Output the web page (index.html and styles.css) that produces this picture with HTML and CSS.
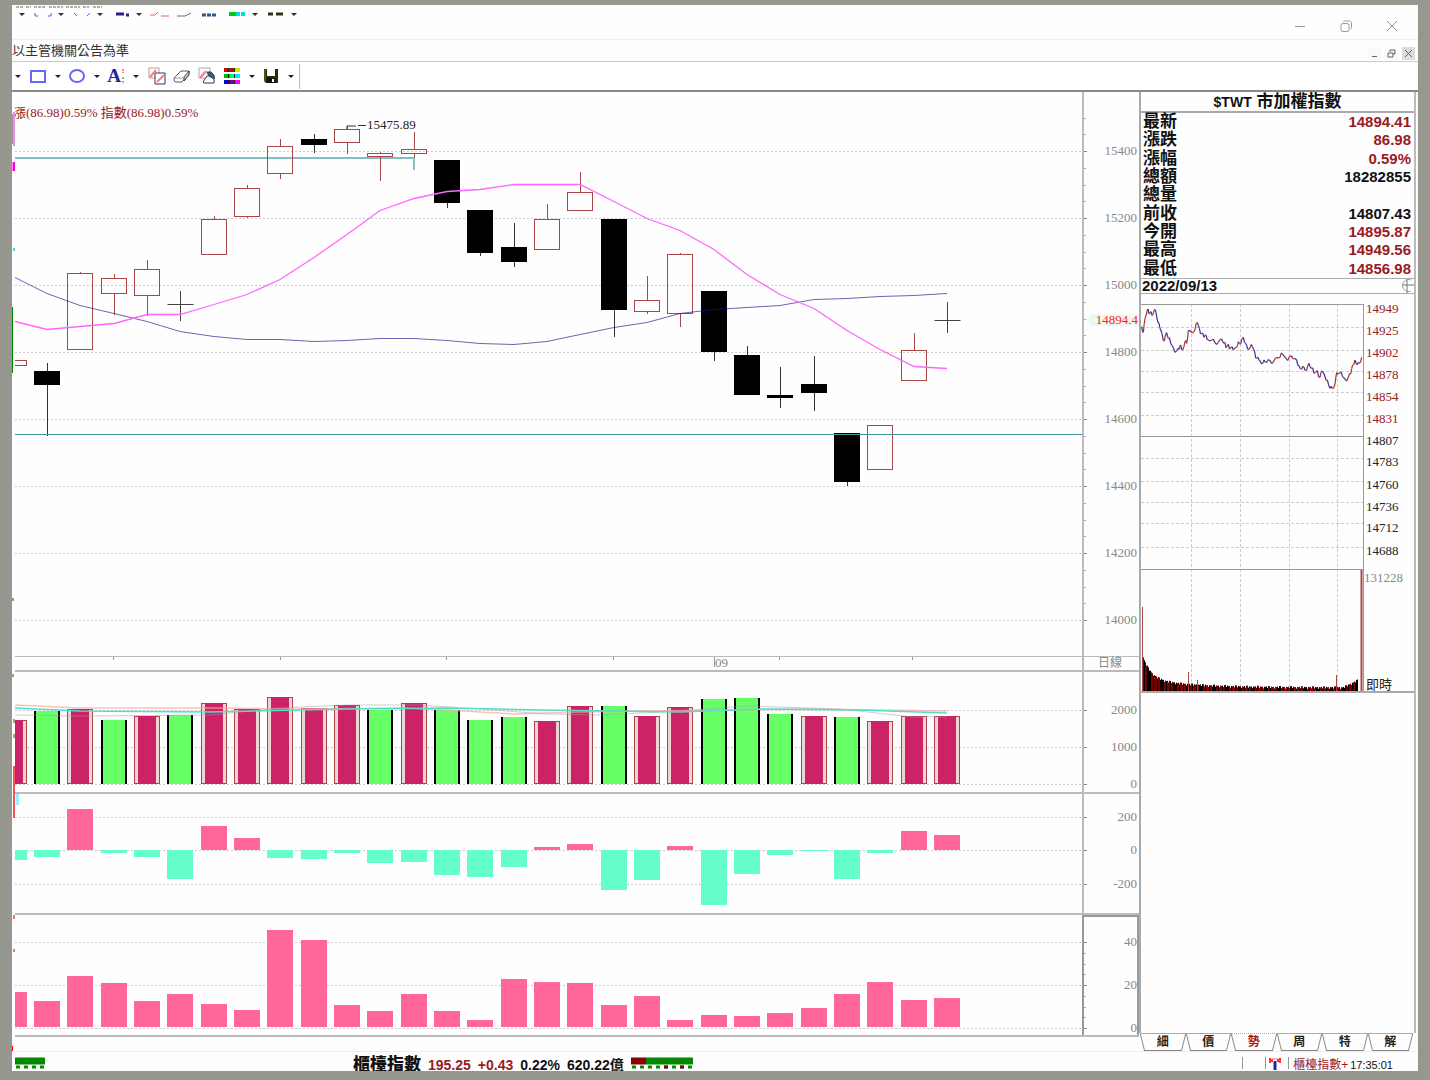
FILE: index.html
```html
<!DOCTYPE html>
<html lang="zh-Hant">
<head>
<meta charset="utf-8">
<title>$TWT 市加權指數</title>
<link rel="stylesheet" href="styles.css">
</head>
<body>
<div class="window">
  <header class="titlebar">
    <svg class="ghost" width="300" height="12" aria-hidden="true">
      <path d="M1 2h8m2 0h5m3 0h12m3 0h14m3 0h14m3 0h6m4 0h9" stroke="#666" stroke-dasharray="3 1"/>
      <path d="M4 8h6l-3 3zM43 8h6l-3 3zM82 8h6l-3 3zM121 8h6l-3 3zM237 8h6l-3 3zM276 8h6l-3 3z" fill="#333"/>
      <path d="M20 8v3h3m10 0h3v-3M59 8l3 3m10 0l3-3" stroke="#55f" fill="none"/>
      <path d="M101 9h8m2 1h3" stroke="#228" stroke-width="3"/>
      <path d="M135 10h5l3-3m3 4h8" stroke="#d66" fill="none"/>
      <path d="M162 11h8l6-3" stroke="#668" fill="none"/>
      <path d="M187 10h14" stroke="#358" stroke-width="3" stroke-dasharray="4 1"/>
      <path d="M214 9h7" stroke="#0c0" stroke-width="4"/><path d="M221 9h9" stroke="#0dd" stroke-width="4" stroke-dasharray="4 1"/>
      <path d="M253 9h15" stroke="#331" stroke-width="3" stroke-dasharray="5 3 7"/>
    </svg>
    <div class="window-buttons">
      <button aria-label="最小化"><svg width="12" height="12"><path d="M1 6.500h10"/></svg></button>
      <button aria-label="還原"><svg width="12" height="12"><rect x="1" y="3.500" width="8" height="8" rx="2"/><path d="M3.500 2c0-1 1-1 2-1h4c1 0 2 1 2 2v4c0 1 0 2-1 2"/></svg></button>
      <button aria-label="關閉"><svg width="12" height="12"><path d="M1 1l10 10M11 1L1 11"/></svg></button>
    </div>
  </header>

  <div class="menubar">
    <span class="notice">以主管機關公告為準</span>
    <div class="child-buttons">
      <button aria-label="最小化子視窗"><svg width="9" height="9"><path d="M2 7.500h5"/></svg></button>
      <button aria-label="還原子視窗"><svg width="9" height="9"><path d="M3 3V1h5v4H6M1 4h5v4H1z"/></svg></button>
      <button class="shaded" aria-label="關閉子視窗"><svg width="9" height="9"><path d="M1 1l7 7M8 1L1 8"/></svg></button>
    </div>
  </div>

  <nav class="toolbar" aria-label="繪圖工具">
    <button class="drop first" aria-label="線段選單"></button>
    <button class="tool" aria-label="矩形"><svg width="18" height="18"><rect x="2" y="4" width="14" height="11" fill="#fff" stroke="#66f" stroke-width="2"/></svg></button>
    <button class="drop" aria-label="矩形選單"></button>
    <button class="tool" aria-label="橢圓"><svg width="18" height="18"><ellipse cx="9" cy="9" rx="7" ry="6" fill="#fff" stroke="#66f" stroke-width="2"/></svg></button>
    <button class="drop" aria-label="橢圓選單"></button>
    <button class="tool letter" aria-label="文字">A<svg width="4" height="16"><path d="M2 1v4" stroke="#e88" stroke-width="2" stroke-dasharray="2 1"/><path d="M2 9v6" stroke="#8b8" stroke-width="2" stroke-dasharray="2 2"/></svg></button>
    <button class="drop" aria-label="文字選單"></button>
    <button class="tool wide" aria-label="複製線段"><svg width="18" height="18"><path d="M1 1h10v10H1z" fill="#fff" stroke="#b99"/><path d="M7 6h10v11H7z" fill="#fff" stroke="#336"/><path d="M2 10l6-7M9 15l7-7" stroke="#f77" stroke-width="2"/></svg></button>
    <button class="tool wide" aria-label="橡皮擦"><svg width="18" height="18"><path d="M1 12q0-1 1-2l6-6h7q2 0 1 2l-6 8q-1 1-2 1H3q-2 0-2-3z" fill="#fff" stroke="#557"/><path d="M11 10l5-6v4l-5 6z" fill="#cc7" stroke="#335"/><path d="M2 11h8l5-6" fill="none" stroke="#99a"/></svg></button>
    <button class="tool wide" aria-label="全部清除"><svg width="18" height="18"><path d="M1 1h11v10H1z" fill="#fff" stroke="#aab"/><path d="M2 11l6-7" stroke="#f77" stroke-width="2"/><path d="M5 15l4-6h7v7H6z" fill="#fff" stroke="#336"/><path d="M9 5h4l3 3v4l-5-3z" fill="#276" stroke="#336"/></svg></button>
    <button class="tool palette" aria-label="色彩"><svg width="18" height="18"><g stroke-width="4"><path d="M1 3h6" stroke="#d00"/><path d="M7 3h5" stroke="#820"/><path d="M12 3h5" stroke="#dd0"/><path d="M1 9h6" stroke="#0b0"/><path d="M7 9h5" stroke="#0f6"/><path d="M12 9h5" stroke="#0ee"/><path d="M1 15h6" stroke="#00e"/><path d="M7 15h5" stroke="#70a"/><path d="M12 15h5" stroke="#f0f"/></g><path d="M5.500 1v16M11.500 1v16" stroke="#222" stroke-dasharray="4 2"/></svg></button>
    <button class="drop" aria-label="色彩選單"></button>
    <button class="tool" aria-label="儲存"><svg width="18" height="18"><path d="M2 2h14v14H4l-2-2z" fill="#2d2a05"/><path d="M5 2h8v7H5z" fill="#fff"/><path d="M5 11h8v5H5z" fill="#111"/><path d="M10 12h2v3h-2z" fill="#fff"/><path d="M3 2v12" stroke="#772"/></svg></button>
    <button class="drop" aria-label="儲存選單"></button>
    <span class="divider"></span>
  </nav>

  <main class="workspace">
    <svg class="edge" aria-hidden="true">
      <path d="M1 22v30" stroke="#433" /><path d="M2 20v34" stroke="#e8e" stroke-width="2"/>
      <path d="M2 70v9" stroke="#f0d" stroke-width="3"/><path d="M2 156v3" stroke="#4dd" stroke-width="2"/>
      <path d="M0 215v66" stroke="#080" stroke-width="2"/><path d="M1 506v3M1 582v3" stroke="#998" stroke-width="2"/>
      <path d="M2 627v4M2 642v4" stroke="#b96" stroke-width="2"/><path d="M2 674v52" stroke="#e55" stroke-width="2"/>
      <path d="M2 823v4M2 857v3" stroke="#e77" stroke-width="2"/><path d="M0 954v14" stroke="#f00" stroke-width="2"/>
    </svg>

    <section class="charts" aria-label="日線圖">
      <div class="pane price">
        <p class="legend">漲(86.98)0.59% 指數(86.98)0.59%</p>
        <svg class="plot" id="price"></svg>
        <svg class="axis" id="price-axis"></svg>
      </div>
      <div class="pane timeline">
        <svg class="plot" id="timeline"></svg>
        <span class="period">日線</span>
      </div>
      <div class="pane volume">
        <svg class="plot" id="volume"></svg>
        <svg class="axis" id="volume-axis"></svg>
      </div>
      <div class="pane flow">
        <svg class="plot" id="flow"></svg>
        <svg class="axis" id="flow-axis"></svg>
      </div>
      <div class="pane strength">
        <svg class="plot" id="strength"></svg>
        <svg class="axis selected" id="strength-axis"></svg>
      </div>
    </section>

    <aside class="quote">
      <div class="quote-body">
        <h1><span>$TWT</span> 市加權指數</h1>
        <table>
          <tr><th>最新</th><td class="up">14894.41</td></tr>
          <tr><th>漲跌</th><td class="up">86.98</td></tr>
          <tr><th>漲幅</th><td class="up">0.59%</td></tr>
          <tr><th>總額</th><td>18282855</td></tr>
          <tr><th>總量</th><td></td></tr>
          <tr><th>前收</th><td>14807.43</td></tr>
          <tr><th>今開</th><td class="up">14895.87</td></tr>
          <tr><th>最高</th><td class="up">14949.56</td></tr>
          <tr><th>最低</th><td class="up">14856.98</td></tr>
        </table>
        <div class="date-row">
          <time datetime="2022-09-13">2022/09/13</time>
          <svg width="14" height="14"><path d="M7 0v14M2 6h12" stroke="#777"/><path d="M11 1a6 6 0 1 0 0 11" fill="none" stroke="#999"/></svg>
        </div>
        <svg class="intraday" id="intraday"></svg>
      </div>
      <div class="tabs" role="tablist">
        <button role="tab">細</button>
        <button role="tab">價</button>
        <button role="tab" class="active" aria-selected="true">勢</button>
        <button role="tab">周</button>
        <button role="tab">特</button>
        <button role="tab">解</button>
      </div>
    </aside>
  </main>

  <footer class="statusbar">
    <svg class="meter-left" width="31" height="14"><path d="M0 4h30" stroke="#080" stroke-width="7"/><path d="M1 10h29" stroke="#080" stroke-width="3" stroke-dasharray="4 4"/></svg>
    <div class="ticker">
      <b>櫃檯指數</b><span class="up">195.25</span><span class="up">+0.43</span><span>0.22%</span><span>620.22億</span>
      <svg width="63" height="14"><path d="M0 4h15" stroke="#800" stroke-width="7"/><path d="M15 4h47" stroke="#080" stroke-width="7"/><path d="M1 10h61" stroke="#080" stroke-width="3" stroke-dasharray="4 4"/><path d="M33 10h30" stroke="#800" stroke-width="3" stroke-dasharray="4 12"/></svg>
    </div>
    <div class="session">
      <i></i><i></i>
      <svg width="14" height="14"><path d="M2 1v5M4 2v3M12 1v5M10 2v3" stroke="#f33" stroke-width="2"/><path d="M4 2h6" stroke="#f66"/><path d="M7 4v9" stroke="#22a" stroke-width="3"/></svg>
      <i></i>
      <span class="up">櫃檯指數+</span><time>17:35:01</time>
    </div>
  </footer>
</div>
<script src="chart.js"></script>
</body>
</html>
```
FILE: styles.css
```css
* { box-sizing: border-box; }

body {
  margin: 0;
  min-height: 100vh;
  padding: 5px 12px 9px;
  background: #96978f;
  color: #111;
  font: 14px/18px "Liberation Sans", "Noto Sans CJK TC", sans-serif;
}

button { padding: 0; border: 0; background: none; color: inherit; font: inherit; }
svg { display: block; overflow: hidden; }
.up { color: #981b1e; }

.window { display: flex; flex-direction: column; background: #fefefe; overflow: hidden; }

.titlebar { display: flex; justify-content: space-between; height: 35px; padding-left: 3px; border-bottom: 1px solid #eff0f4; }
.window-buttons { display: flex; align-items: center; padding: 8px 3px 0 0; }
.window-buttons button { display: grid; place-items: center; width: 46px; height: 26px; }
.window-buttons svg { fill: none; stroke: #999; }

.menubar { display: flex; justify-content: space-between; align-items: center; height: 22px; border-bottom: 1px solid #ccc; }
.notice { font-size: 13px; color: #333; }
.child-buttons { display: flex; gap: 4px; padding: 6px 3px 0 0; }
.child-buttons button { display: grid; place-items: center; width: 13px; height: 13px; background: #fafafa; }
.child-buttons .shaded { background: #ddd; }
.child-buttons svg { fill: none; stroke: #567; }

.toolbar { display: flex; align-items: center; height: 30px; padding-left: 3px; border-bottom: 2px solid #888; background: #fff; }
.tool { display: grid; place-items: center; width: 22px; height: 26px; }
.tool.wide { width: 25px; }
.tool.palette { margin-left: 2px; }
.tool.letter { display: flex; align-items: center; justify-content: center; color: #229; font: bold 19px/26px "Liberation Serif", serif; }
.drop { display: grid; place-items: center; width: 17px; height: 26px; }
.drop.first { width: 12px; justify-items: start; }
.drop::before { content: ""; border: 3px solid transparent; border-top-color: #222; border-bottom: 0; }
.divider { width: 1px; height: 25px; background: #bbb; }

.workspace { display: grid; grid-template-columns: 3px 1fr 279px; border-bottom: 1px solid #eee; }
.edge { width: 3px; height: 100%; }

.charts { min-width: 0; padding-bottom: 14px; overflow: hidden; }
.pane { position: relative; display: grid; grid-template-columns: 1fr 57px; border-bottom: 2px solid #bbb; }
.pane > svg { width: 100%; height: 100%; }
.price { height: 565px; border-bottom-width: 1px; }
.timeline { height: 15px; }
.timeline > svg { overflow: visible; }
.volume { height: 122px; }
.flow { height: 121px; }
.strength { height: 122px; }
.axis, .period { border-left: 2px solid #bbb; }
.axis.selected { border: 2px solid #999; border-bottom: 0; }
.period { color: #888; font: 12px/13px "Liberation Sans", "Noto Sans CJK TC", sans-serif; padding-left: 14px; }
.legend { position: absolute; top: 13px; left: -2px; margin: 0; color: #981b1e; font: 13px/16px "Liberation Serif", "Noto Sans CJK TC", serif; }

text { font: 13px "Liberation Serif", "Noto Sans CJK TC", serif; }

.quote { display: flex; flex-direction: column; padding-right: 2px; }
.quote-body { flex: 1; border-left: 2px solid #aaa; border-right: 2px solid #bbb; }
.quote h1 { height: 21px; margin: 0; border-bottom: 2px solid #aaa; text-align: center; font: bold 17px/20px "Liberation Sans", "Noto Sans CJK TC", sans-serif; }
.quote h1 span { font-size: 14px; }
.quote table { width: 100%; height: 165px; border-collapse: collapse; }
.quote th, .quote td { padding: 0 3px; line-height: 18px; }
.quote th { padding-left: 2px; text-align: left; font: bold 17px/18px "Liberation Sans", "Noto Sans CJK TC", sans-serif; }
.quote td { text-align: right; font-size: 15px; font-weight: bold; }
.date-row { display: flex; justify-content: space-between; align-items: center; height: 16px; padding-left: 1px; border: solid #aaa; border-width: 1px 0; font-size: 15px; line-height: 14px; font-weight: bold; }
.intraday { width: 100%; height: 400px; }

.tabs { display: flex; height: 18px; margin: 0 3px 0 1px; }
.tabs button { position: relative; flex: 1; height: 18px; color: #222; font: bold 12px/17px "Liberation Sans", "Noto Sans CJK TC", sans-serif; border-top: 1px solid #aaa; }
.tabs button::before, .tabs button::after { content: ""; position: absolute; top: 0; bottom: 0; width: 50%; border-bottom: 1px solid #888; }
.tabs button::before { left: 2px; border-left: 1px solid #888; transform: skewX(14deg); }
.tabs button::after { right: 2px; border-right: 1px solid #888; transform: skewX(-14deg); }
.tabs .active { color: #a11; border-top: 1px dotted #aaa; }

.statusbar { display: grid; grid-template-columns: 338px 1fr auto; height: 19px; padding: 5px 25px 0 3px; overflow: hidden; line-height: 16px; }
.ticker { display: flex; gap: 7px; font-weight: bold; }
.ticker b { font-size: 17px; }
.session { display: flex; gap: 2px; font-size: 11px; }
.session span { font-size: 12px; }
.session i { width: 1px; height: 12px; margin-right: 20px; background: #999; }
.session i + svg { margin: 0 2px 0 -20px; }
.session svg + i { margin: 0 2px; }
```
FILE: chart.js
```js
const NS = "http://www.w3.org/2000/svg";
const RED = "#a94646";
const GRID = "#ccc";
const barX = i => Math.round(13.5 + 33.34 * i);

// Opens a drawing group whose origin is the top-left corner of the window area.
function layer(id, left, top) {
  const g = document.createElementNS(NS, "g");
  g.setAttribute("transform", `translate(${-left},${-top})`);
  document.getElementById(id).append(g);
  return (tag, attrs, text) => {
    const el = document.createElementNS(NS, tag);
    for (const k in attrs) el.setAttribute(k, attrs[k]);
    if (text) el.textContent = text;
    g.append(el);
  };
}
const rect = (d, x, y, width, height, fill, stroke = "none") => d("rect", { x, y, width, height, fill, stroke });
const line = (d, x1, y1, x2, y2, stroke, extra = {}) => d("path", { d: `M${x1} ${y1}L${x2} ${y2}`, stroke, fill: "none", ...extra });
const curve = (d, pts, stroke, extra = {}) => d("polyline", { points: pts.join(" "), stroke, fill: "none", ...extra });
const grid = (d, ys) => ys.forEach(y => line(d, 15, y, 4000, y, GRID, { "stroke-dasharray": "2 2" }));

function axis(id, top, ys, labels, minor) {
  const d = layer(id, 1084, top);
  ys.forEach((y, i) => {
    line(d, 1084, y, 1087, y, "#888");
    d("text", { x: 1137, y: y + 3, fill: "#888", "text-anchor": "end" }, labels[i]);
  });
  minor.forEach(y => line(d, 1084, y, 1086, y, "#aaa"));
  return d;
}

// Daily candles: kind, high, body top, body bottom, low
const candles = [
  ["r",360,360,366,366],["k",363,371,385,436],["r",272,273,350,350],["r",274,278,294,315],["r",260,269,296,316],
  ["d",291,305,305,321],["r",216,219,255,255],["r",185,188,217,218],["r",139,146,174,179],["k",134,139,145,153],
  ["r",126,129,143,154],["r",152,153,157,181],["r",132,149,154,158],["k",160,160,203,208],["k",210,210,253,256],
  ["k",223,247,262,267],["r",204,219,250,250],["r",172,192,211,211],["k",219,219,310,337],["r",276,300,312,314],
  ["r",253,254,314,327],["k",291,291,352,361],["k",346,355,395,395],["k",367,395,398,408],["k",356,384,393,411],
  ["k",433,433,482,486],["r",425,425,470,470],["r",333,350,381,381],["d",302,321,321,333]
];
const priceGrid = [151.5,218.5,285.5,352.5,419.5,486.5,553.5,620.5];
{
  const d = layer("price", 15, 92);
  grid(d, priceGrid);
  line(d, 15, 158, 414, 158, "#84bec5", { "stroke-width": 2 });
  line(d, 414, 158, 414, 170, "#84bec5", { "stroke-width": 2 });
  candles.forEach(([kind, high, top, low, bottom], i) => {
    const x = barX(i) + .5;
    if (kind === "d") {
      line(d, x, high, x, bottom, "#444");
      line(d, x - 13, top - .5, x + 13, top - .5, "#444");
    } else if (kind === "k") {
      line(d, x, high, x, bottom, "#333");
      rect(d, x - 13.5, top, 26, low - top, "#000");
    } else {
      line(d, x, high, x, top, RED);
      line(d, x, low, x, bottom, RED);
      rect(d, x - 13, top + .5, 25, low - top - 1, "none", RED);
    }
  });
  line(d, 15, 434.5, 4000, 434.5, "#4599a3");
  curve(d, [277,293,305,313,321,331,336,339,339,341,340,338,338,340,343,344,341,334,327,322,313,309,307,305,299,298,296,295,293]
    .map((y, i) => [Math.max(15, barX(i)), y + .5]), "rgba(20,20,140,.65)");
  curve(d, [321,329,326,323,314,314,304,294,279,257,234,210,198,191,189,184,184,184,201,218,230,249,274,294,308,330,349,366,368]
    .map((y, i) => [Math.max(15, barX(i)), y + .5]), "#f6f", { "stroke-width": 1.3 });
  curve(d, [[347,129],[347,126],[356,126]], "#333");
  line(d, 358, 125.5, 366, 125.5, "#333");
  d("text", { x: 367, y: 129, fill: "#222" }, "15475.89");
}
{
  const minor = [];
  for (let i = 1; i < 33; i++) if (i % 4) minor.push(Math.round(151 - 67 + i * 16.75) + .5);
  const d = axis("price-axis", 92, priceGrid, ["15400","15200","15000","14800","14600","14400","14200","14000"], minor.filter(y => y > 110));
  d("path", { d: "M1086 320l6-6h47v12h-47z", fill: "#eef8ee" });
  d("text", { x: 1138, y: 324, fill: "#f22", "text-anchor": "end" }, "14894.4");
}
{
  const d = layer("timeline", 15, 657);
  [113.5,280.5,446.5,613.5,714.5,779.5,912.5].forEach(x => line(d, x, 657, x, x === 714.5 ? 667 : 660, "#999"));
  d("text", { x: 715, y: 667, fill: "#888" }, "09");
}

// Volume
const volume = "r720 g711 r709 g720 r716 g715 r703 r709 r697 r708 r705 g710 r703 g710 g720 g717 r721 r706 g706 r716 r707 g699 g698 g714 r716 g717 r721 r716 r716".split(" ");
{
  const d = layer("volume", 15, 672);
  grid(d, [710.5,747.5,784.5]);
  volume.forEach((v, i) => {
    const x = barX(i), y = +v.slice(1), green = v[0] === "g";
    if (green) {
      rect(d, x - 13, y, 26, 784 - y, "#000");
      rect(d, x - 11, y, 22, 784 - y, "#6f6");
    } else {
      rect(d, x - 12.5, y + .5, 25, 783 - y, "#eed5d5", RED);
      rect(d, x - 9, y, 18, 784 - y, "#cc2266");
    }
  });
  curve(d, [[15,705],[80,708],[210,708],[300,709],[400,708],[447,710],[513,714],[580,712],[647,711],[714,710],[800,709],[947,711]], "rgba(250,170,150,.7)", { "stroke-width": 1.5 });
  curve(d, [[15,715],[80,716],[210,715],[280,708],[347,705],[420,705],[480,709],[546,714],[600,715],[680,711],[747,706],[840,709],[913,717],[947,717]], "rgba(160,160,160,.5)");
  curve(d, [[15,708],[80,711],[210,712],[347,709],[447,708],[540,710],[613,711],[680,712],[760,709],[860,710],[947,713]], "#5dc", { "stroke-width": 1.5 });
}
axis("volume-axis", 672, [710.5,747.5,784.5], ["2000","1000","0"], []);

// Net flow, drawn up or down from the zero line
const flow = [860,857,809,853,857,879,826,838,858,859,853,863,862,875,877,867,847,844,890,880,846,905,874,855,851,879,853,831,835];
{
  const d = layer("flow", 15, 794);
  grid(d, [817.5,850.5,884.5]);
  flow.forEach((y, i) => rect(d, barX(i) - 13, Math.min(y, 850), 26, Math.abs(850 - y), y < 850 ? "#ff6699" : "#66ffcc"));
  line(d, 17.5, 794, 17.5, 805, "#9ef", { "stroke-width": 3 });
}
axis("flow-axis", 794, [817.5,850.5,884.5], ["200","0","-200"], []);

const strength = [992,1001,976,983,1001,994,1004,1010,930,940,1005,1011,994,1011,1020,979,982,983,1005,996,1020,1015,1016,1013,1008,994,982,1000,998];
{
  const d = layer("strength", 15, 915);
  grid(d, [942.5,985.5,1028.5]);
  strength.forEach((y, i) => rect(d, barX(i) - 13, y, 26, 1027 - y, "#ff6699"));
}
axis("strength-axis", 917, [942.5,985.5,1028.5], ["40","20","0"], [953.5,964.5,974.5,996.5,1007.5,1017.5]);

// Intraday price and volume
{
  const d = layer("intraday", 1141, 294), dash = { "stroke-dasharray": "3 2" };
  [327.5,350.5,371.5,392.5,415.5,458.5,481.5,502.5,523.5,547.5].forEach(y => line(d, 1141, y, 1363, y, GRID, dash));
  [1191.5,1240.5,1289.5,1337.5].forEach(x => line(d, x, 304, x, 691, GRID, dash));
  [304.5,436.5,569.5].forEach(y => line(d, 1141, y, 1364, y, "#999"));
  line(d, 1363.5, 304, 1363.5, 691, "#999");
  const raw = "185,140 190,157 195,115 202,90 207,102 213,95 220,100 226,90 230,110 237,130 242,150 250,182 255,172 260,158 265,175 272,190 280,203 290,213 298,208 302,195 308,210 315,185 320,190 325,152 335,158 345,150 352,128 358,145 365,160 372,172 378,165 385,180 395,180 405,188 415,187 425,177 432,190 438,203 445,193 452,203 460,210 468,203 475,185 482,192 490,172 497,190 503,207 510,203 518,202 524,215 530,235 537,240 543,250 552,240 560,247 570,242 580,247 590,232 600,232 608,223 618,235 628,230 640,237 650,240 657,258 665,268 672,262 680,270 687,250 694,265 702,280 712,272 720,292 726,273 735,290 742,300 750,325 757,325 765,312 770,278 778,280 788,290 795,297 805,292 812,282 818,255 825,240 832,255 838,250 845,232";
  const pts = raw.split(" ").map(p => p.split(",").map(Number)).map(([x, y]) => [1080 + x / 3, 280 + y / 3]);
  // Each leg is split in two with an uneven tick between its ends
  const ticks = [2, -1, 1, -3, 0, 3, -2, -1, 2, 1, -2];
  let prev = pts[0];
  pts.slice(1).forEach(([x, y], i) => {
    const mid = [(prev[0] + x) / 2, (prev[1] + y) / 2 + ticks[i % ticks.length]];
    for (const p of [mid, [x, y]]) {
      line(d, prev[0], prev[1], p[0], p[1], p[1] < prev[1] ? "#a33" : "#339", { "stroke-width": 1.2 });
      prev = p;
    }
  });
  for (let x = 1142; x < 1358; x++) {
    const t = x - 1142;
    let h = 2 + 24 * Math.exp(-t / 8) + 9 * Math.exp(-t / 45) + (t * t * 7 % 11) / 4;
    if (x > 1343) h += (x - 1343) / 2;
    if (x === 1142) h = 84;
    if (x === 1188) h = 19;
    if (x === 1197) h = 11;
    if (x === 1336) h = 16;
    const spike = [1142, 1188, 1197, 1336].includes(x);
    line(d, x + .5, 691, x + .5, 691 - h, spike ? RED : (t * t * 5 % 13 < 7 ? "#700" : "#000"));
  }
  line(d, 1361.5, 570, 1361.5, 691, RED, { "stroke-width": 2 });
  line(d, 1141, 692, 1415, 692, "#aaa", { "stroke-width": 2 });
  const ys = [308,330,352,374,396,418,440,461,484,506,527,550];
  [14949,14925,14902,14878,14854,14831,14807,14783,14760,14736,14712,14688].forEach((v, i) =>
    d("text", { x: 1366, y: ys[i] + 5, fill: i < 6 ? "#981b1e" : "#222" }, String(v)));
  d("text", { x: 1364, y: 582, fill: "#888" }, "131228");
  d("text", { x: 1366, y: 689, fill: "#222" }, "即時");
}
```
